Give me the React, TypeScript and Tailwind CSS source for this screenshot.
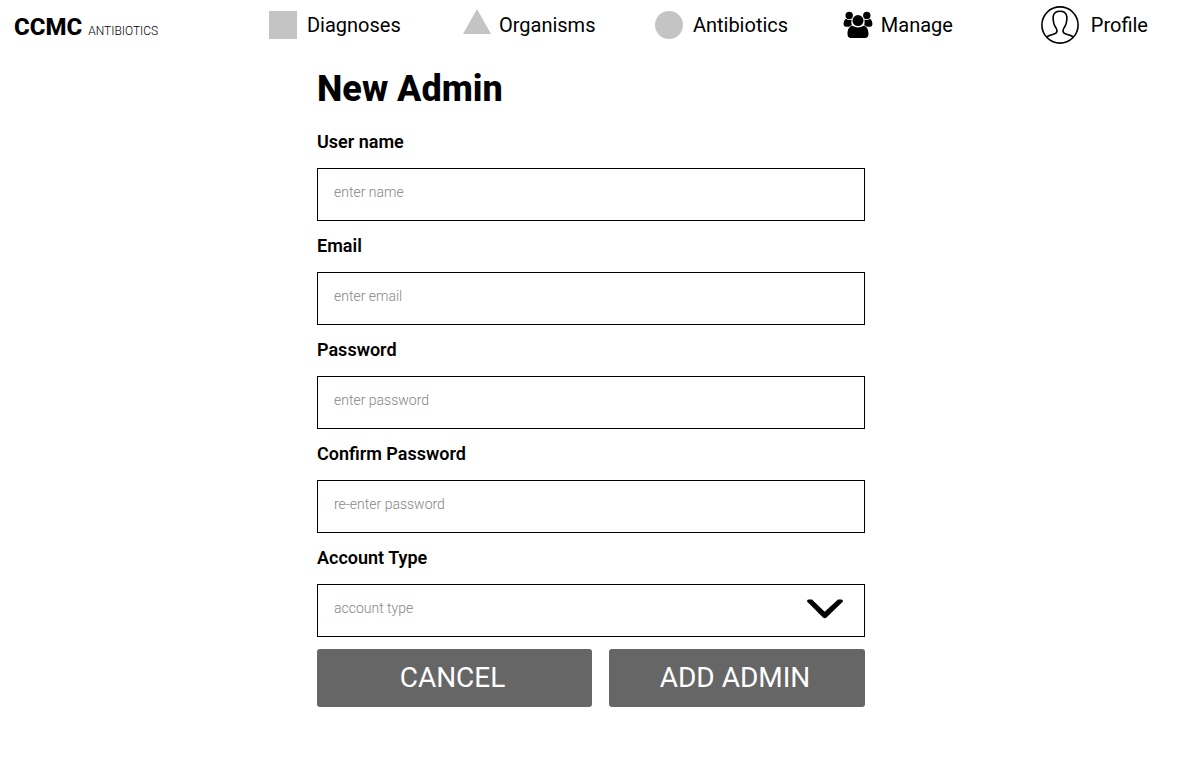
import type { ReactNode } from "react";

function NavItem({ icon, label }: { icon: ReactNode; label: string }) {
  return (
    <a href="#" className="flex items-center text-xl leading-6 text-black">
      {icon}
      {label}
    </a>
  );
}

function ManageIcon() {
  return (
    <svg viewBox="0 0 30 28" className="mr-2 h-7 w-[30px] shrink-0" aria-hidden="true">
      <circle cx="6.2" cy="4.5" r="3.7" />
      <circle cx="23.8" cy="4.5" r="3.7" />
      <path d="M3 7.800C1.300 9 .6 11 .6 13.300c0 1.500.9 2.500 2.300 2.500h3.300c.9-.8 1.700-1.200 2.700-1.500C8.300 13 8.200 11 8.600 8.600 6.700 9.500 4.500 9.200 3 7.800Z" />
      <path d="M27 7.800c1.700 1.200 2.400 3.200 2.400 5.500 0 1.500-.9 2.500-2.300 2.500h-3.300c-.9-.8-1.700-1.200-2.700-1.500.6-1.300.7-3.300.3-5.700 1.900.9 4.100.6 5.600-.8Z" />
      <circle cx="15" cy="9.600" r="5.500" />
      <path d="M9.800 14.800C6 15.300 4.500 18.500 4.500 23.300c0 2.500 1.300 3.600 3.500 3.600h14c2.200 0 3.500-1.100 3.500-3.600 0-4.800-1.500-8-5.300-8.500-2.900 2.200-7.500 2.200-10.400 0Z" />
    </svg>
  );
}

function ProfileIcon() {
  return (
    <svg
      viewBox="0 0 38 38"
      className="mr-3 size-[38px] shrink-0 fill-none stroke-black stroke-[1.6]"
      aria-hidden="true"
    >
      <circle cx="19" cy="19" r="18.100" />
      <path
        strokeLinejoin="round"
        d="M5.500 31C7.500 29.500 10 28.800 12.500 28.200C15 27.600 16 26.800 16 25C16 23.300 15.200 22.400 14.300 20.800C12.800 18.500 12.400 16.800 12.300 14.500C12 12.500 12 11.300 12.300 10C13 6.800 15.500 5.200 19 5.200C22.500 5.200 25 6.800 25.700 10C26 11.300 26 12.500 25.700 14.500C25.600 16.800 25.200 18.500 23.700 20.800C22.800 22.400 22 23.300 22 25C22 26.800 23 27.600 25.500 28.200C28 28.800 30.500 29.500 32.500 31"
      />
    </svg>
  );
}

const fieldClass =
  "block h-[53px] w-full appearance-none rounded-none border border-black bg-white px-4 pb-[5px] text-sm font-light outline-none placeholder:text-[#858585] placeholder:opacity-100";

const labelClass = "mb-4 block text-lg leading-5 font-semibold";

const fields = [
  { id: "name", label: "User name", type: "text", placeholder: "enter name" },
  { id: "email", label: "Email", type: "email", placeholder: "enter email" },
  { id: "password", label: "Password", type: "password", placeholder: "enter password" },
  { id: "confirm", label: "Confirm Password", type: "password", placeholder: "re-enter password" },
];

export default function App() {
  return (
    <div className="min-h-screen bg-white font-['Roboto',sans-serif] text-black">
      <header className="grid h-[50px] grid-cols-[255fr_194fr_192fr_188fr_198fr_auto] items-center pr-[34px] pl-[14px]">
        <a href="#" className="flex items-baseline gap-1.5 pt-1 whitespace-nowrap">
          <span className="text-2xl font-extrabold">CCMC</span>
          <span className="text-xs font-light">ANTIBIOTICS</span>
        </a>
        <nav className="contents">
          <NavItem label="Diagnoses" icon={<span className="mr-2.5 size-7 bg-[#c4c4c4]" />} />
          <NavItem
            label="Organisms"
            icon={
              <svg viewBox="0 0 28 32" className="mr-2 h-8 w-7 fill-[#c4c4c4]" aria-hidden="true">
                <path d="M14 0 28 25H0Z" />
              </svg>
            }
          />
          <NavItem
            label="Antibiotics"
            icon={<span className="mr-2.5 size-7 rounded-full bg-[#c4c4c4]" />}
          />
          <NavItem label="Manage" icon={<ManageIcon />} />
          <NavItem label="Profile" icon={<ProfileIcon />} />
        </nav>
      </header>

      <main className="mx-auto max-w-[548px] pt-[19px] pb-8">
        <h1 className="mb-[23px] text-4xl leading-10 font-extrabold">New Admin</h1>
        <form onSubmit={(e) => e.preventDefault()}>
          <div className="flex flex-col gap-[15px]">
            {fields.map((f) => (
              <div key={f.id}>
                <label htmlFor={f.id} className={labelClass}>
                  {f.label}
                </label>
                <input id={f.id} type={f.type} placeholder={f.placeholder} className={fieldClass} />
              </div>
            ))}
            <div>
              <label htmlFor="type" className={labelClass}>
                Account Type
              </label>
              <div className="relative">
                <select id="type" defaultValue="" className={`${fieldClass} text-[#858585]`}>
                  <option value="">account type</option>
                </select>
                <svg
                  viewBox="0 0 36 20"
                  className="pointer-events-none absolute top-[15px] right-[22px] h-5 w-9"
                  aria-hidden="true"
                >
                  <path d="M0 2.500Q0 .5 1.500.5H5L17.700 12.700 31 .5H34.500Q36 .5 36 2.500L19.500 18.500Q17.700 20 16 18.500Z" />
                </svg>
              </div>
            </div>
          </div>
          <div className="mt-3 grid grid-cols-[275fr_256fr] gap-[17px] text-[28px] text-white">
            <button type="button" className="h-[58px] rounded-[3px] bg-[#666666] pr-1">
              CANCEL
            </button>
            <button type="submit" className="h-[58px] rounded-[3px] bg-[#666666] pr-1">
              ADD ADMIN
            </button>
          </div>
        </form>
      </main>
    </div>
  );
}
